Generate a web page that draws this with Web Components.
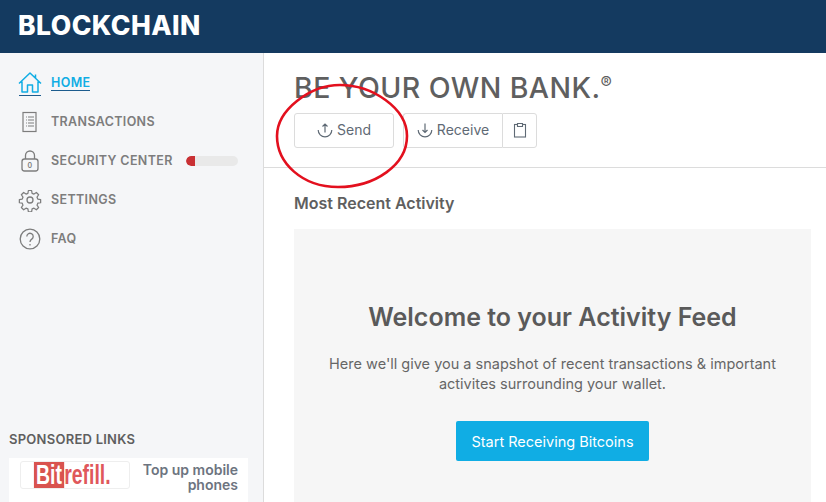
<!DOCTYPE html>
<html><head><meta charset="utf-8">
<style>
html,body{margin:0;padding:0;height:100%;overflow:hidden;background:#fff}
body{font-family:Inter,"Open Sans",sans-serif}
</style></head><body>
<template id="t-app"><style>
:host{display:grid;grid-template-rows:53px 1fr;width:826px;height:502px;overflow:hidden;position:relative}
.body{display:grid;grid-template-columns:264px 1fr;min-height:0}
</style><app-header></app-header><div class="body"><side-bar></side-bar><main-pane></main-pane></div>
<svg style="position:absolute;left:270px;top:78px" width="145" height="115" viewBox="270 78 145 115" fill="none"><path d="M340 85C372 85 407 108 407 136C407 165 375 187 338 187C302 187 277 163 277 136C277 110 310 85 340 85Z" stroke="#e3101e" stroke-width="2.600"/></svg>
</template>
<template id="t-header"><style>
:host{display:flex;align-items:center;background:#143a60;color:#fff;padding:0 0 4px 18px;box-sizing:border-box;font:800 26.500px Inter,sans-serif;letter-spacing:.45px}
</style><slot></slot></template>
<template id="t-side"><style>
:host{display:flex;flex-direction:column;background:#f5f6f8;border-right:1px solid #dcdcdc;box-sizing:border-box;padding-top:10px;min-height:0}
nav{display:flex;flex-direction:column;padding-left:18px}
.sp{flex:1}
h4{margin:0;padding:0 0 0 9px;font:600 13px/16px Inter,sans-serif;color:#5f5f5f;letter-spacing:.25px}
.ad{margin:11px 15px 0 9px;background:#fff;height:44px;display:flex;padding:3px 10px 0 11px;box-sizing:border-box;justify-content:space-between}
.logo{width:110px;height:28px;box-sizing:border-box;border:1px solid #eee;border-radius:3px;display:flex;align-items:center;justify-content:center;font:700 27px/26px "Liberation Sans",sans-serif;color:#e0585b;padding-right:5px}
.logo b{background:#d9534f;color:#fff;font-weight:700;padding:0 3px;height:26px}
.logo span{transform:scaleX(.72);transform-origin:center;display:flex;white-space:nowrap}
.txt{font:600 14px/14.500px Inter,sans-serif;color:#6d7480;text-align:right;width:100px;margin-top:2px}
</style><nav>
<nav-item active label="HOME"><svg viewBox="0 0 24 24" width="24" height="24" fill="none" stroke="#10ade4" stroke-width="1.500" stroke-linejoin="round"><path d="M1 12.500 12 2l11 10.500M4 10.500v10.500h5.500v-7h5v7H20V10.500M17.500 3.500v3.500"/></svg></nav-item>
<nav-item label="TRANSACTIONS"><svg viewBox="0 0 24 24" width="24" height="24" fill="none" stroke="#7d7d7d" stroke-width="1.200"><rect x="5" y="2.500" width="13" height="19"/><path d="M8 7h.9M10 7h6M8 10h.9M10 10h6M8 13h.9M10 13h6M8 16h.9M10 16h6"/></svg></nav-item>
<nav-item label="SECURITY CENTER"><svg viewBox="0 0 24 24" width="24" height="24" fill="none" stroke="#7d7d7d" stroke-width="1.300"><rect x="4" y="10" width="16" height="12" rx="2.500"/><path d="M7.500 10V6.500a4.500 4.500 0 0 1 9 0V10"/><text x="12" y="19" font-size="7" font-family="Inter" fill="#7d7d7d" stroke="none" text-anchor="middle">0</text></svg><div class="b" slot="extra" style="width:52px;height:10px;border-radius:5px;background:#e9e9e9;margin-left:13px;overflow:hidden"><div style="width:9px;height:10px;background:#c93034;border-radius:5px 0 0 5px"></div></div></nav-item>
<nav-item label="SETTINGS"><svg viewBox="0 0 24 24" width="24" height="24" fill="none" stroke="#7d7d7d" stroke-width="1.300" stroke-linejoin="round"><circle cx="12" cy="12" r="3"/><path d="M10.300 2h3.400l.5 3 2 .8 2.500-1.700 2.400 2.400-1.700 2.500.8 2 3 .5v3.400l-3 .5-.8 2 1.700 2.500-2.400 2.400-2.500-1.700-2 .8-.5 3h-3.400l-.5-3-2-.8-2.500 1.700-2.400-2.400 1.700-2.500-.8-2-3-.5v-3.400l3-.5.8-2-1.700-2.500 2.400-2.400 2.500 1.700 2-.8z" transform="translate(.6 .6) scale(.95)"/></svg></nav-item>
<nav-item label="FAQ"><svg viewBox="0 0 24 24" width="24" height="24" fill="none" stroke="#7d7d7d" stroke-width="1.300"><circle cx="12" cy="12" r="9.800"/><path d="M8.800 9.500a3.200 3.200 0 1 1 5 2.600c-1.200.8-1.800 1.400-1.800 3"/><path d="M12 17v1.500"/></svg></nav-item>
</nav><div class="sp"></div><h4>SPONSORED LINKS</h4>
<div class="ad"><div class="logo"><span><b>Bit</b>refill.</span></div><div class="txt">Top up mobile phones</div></div></template>
<template id="t-item"><style>
:host{display:flex;align-items:center;height:39px;font:600 12.500px Inter,sans-serif;color:#7d7d7d;letter-spacing:.35px}
.i{width:24px;height:24px;margin-right:9px;flex:none;position:relative}
:host([active]) {color:#10ade4}
:host([active]) .l{border-bottom:1px solid #1c5c8e;line-height:15px}
:host([active]) .i::after{content:"";position:absolute;left:1px;right:1px;bottom:-1px;border-bottom:1px solid #1c5c8e}
</style><div class="i"><slot></slot></div><span class="l"></span><slot name="extra"></slot></template>
<template id="t-main"><style>
:host{display:flex;flex-direction:column;min-width:0;background:#fff}
.top{height:115px;border-bottom:1px solid #dcdcdc;padding:18px 0 0 30px;box-sizing:border-box;flex:none}
h1{margin:0;font:500 28.500px/34px Inter,sans-serif;color:#5f5f5f;letter-spacing:.42px;height:42px}
h1 sup{font-size:17px;font-weight:400;line-height:0;vertical-align:9px;letter-spacing:0}
.btns{display:flex}
.body{padding:25px 15px 0 30px;flex:1;min-height:0;display:flex;flex-direction:column}
h2{margin:0;font:600 16px/20px Inter,sans-serif;color:#5f5f5f}
</style><div class="top"><h1>BE YOUR OWN BANK.<sup>®</sup></h1><div class="btns">
<ui-btn style="width:100px;margin-right:9px"><svg viewBox="0 0 16 16" width="16" height="16" fill="none" stroke="#5f6a75" stroke-width="1.200"><path d="M8 10.500V2M5.500 4.500 8 2l2.500 2.500M1.200 8a6.800 6.800 0 0 0 13.600 0"/></svg>Send</ui-btn>
<ui-btn style="width:99px;border-radius:3px 0 0 3px;border-right:0"><svg viewBox="0 0 16 16" width="16" height="16" fill="none" stroke="#5f6a75" stroke-width="1.200"><path d="M8 1.500v9M5.500 8 8 10.500 10.500 8M1.200 8a6.800 6.800 0 0 0 13.600 0"/></svg>Receive</ui-btn>
<ui-btn style="width:35px;border-radius:0 3px 3px 0"><svg viewBox="0 0 16 16" width="16" height="16" fill="none" stroke="#5f6a75" stroke-width="1.100"><rect x="2.500" y="2.500" width="11" height="12.500"/><path d="M5.500 4.500V1.500h5v3z" fill="#fff"/></svg></ui-btn>
</div></div><div class="body"><h2>Most Recent Activity</h2><activity-card></activity-card></div></template>
<template id="t-btn"><style>
:host{display:flex;align-items:center;justify-content:center;gap:4px;height:35px;box-sizing:border-box;border:1px solid #dcdcdc;border-radius:3px;font:400 14px Inter,sans-serif;color:#5f6a75;background:#fff;padding-bottom:2px}
</style><slot></slot></template>
<template id="t-card"><style>
:host{display:flex;flex-direction:column;align-items:center;background:#f6f6f6;margin-top:16px;flex:1;text-align:center;padding-top:73px}
h3{margin:0;font:600 25px/30px Inter,sans-serif;color:#5a5a5a;letter-spacing:0}
p{margin:22px 0 0;font:400 14.500px/20px Inter,sans-serif;color:#666;width:480px}
.cta{margin-top:27px;background:#10ade4;color:#fff;width:193px;height:40px;border-radius:2px;display:flex;align-items:center;justify-content:center;font:400 14.500px Inter,sans-serif}
</style><h3>Welcome to your Activity Feed</h3><p>Here we'll give you a snapshot of recent transactions &amp; important activites surrounding your wallet.</p><div class="cta">Start Receiving Bitcoins</div></template>
<app-root></app-root>
<script>
function reg(n,t,fn){customElements.define(n,class extends HTMLElement{constructor(){super();const s=this.attachShadow({mode:'open'});s.appendChild(document.getElementById(t).content.cloneNode(true));}connectedCallback(){fn&&fn.call(this)}})}
reg('app-header','t-header',function(){if(!this.textContent)this.textContent='BLOCKCHAIN'});
reg('nav-item','t-item',function(){this.shadowRoot.querySelector('.l').textContent=this.getAttribute('label')});
reg('ui-btn','t-btn');reg('activity-card','t-card');reg('main-pane','t-main');reg('side-bar','t-side');reg('app-root','t-app');
</script></body></html>
